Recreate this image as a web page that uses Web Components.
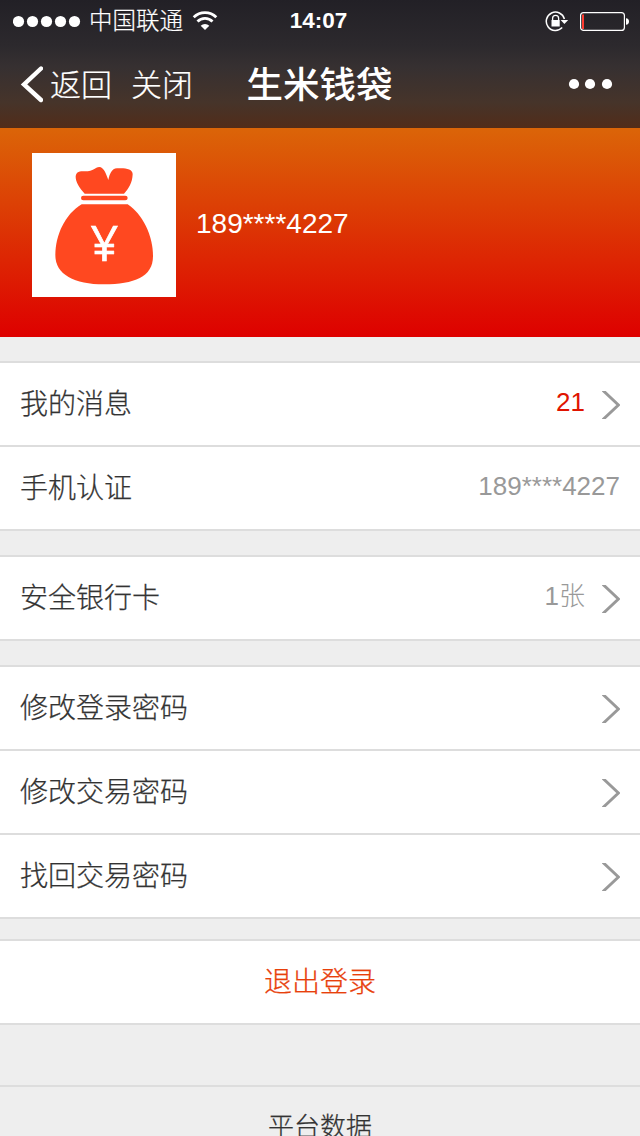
<!DOCTYPE html>
<html lang="zh-CN">
<head>
<meta charset="utf-8">
<title>生米钱袋</title>
<style>
    html, body {
        margin: 0;
        height: 100%;
        overflow: hidden;
        background: #eee;
    }
    body {
        font-family: "Liberation Sans", "Noto Sans CJK SC", sans-serif;
        color: #333;
    }
</style>
</head>
<body>
<wallet-page></wallet-page>

<script>
// 状态栏
class StatusBar extends HTMLElement {
    constructor() {
        super();
        this.attachShadow({ mode: 'open' });
        this.shadowRoot.innerHTML = `
            <style>
                :host {
                    display: grid;
                    grid-template-columns: 1fr auto 1fr;
                    align-items: center;
                    height: 40px;
                    padding: 0 13px 0 13px;
                    color: #fff;
                }
                .left, .right { display: flex; align-items: center; }
                .right { justify-content: flex-end; gap: 10px; margin-right: -2px; }
                .carrier {
                    margin: 0 9px 0 8px;
                    font-size: 23.5px;
                    line-height: 41px;
                    font-weight: 300;
                    -webkit-text-stroke: .2px;
                }
                .time { margin-right: 3px; font-size: 22.5px; font-weight: bold; line-height: 42px; }
                svg { display: block; }
            </style>
            <div class="left">
                <svg width="68" height="40" fill="#fff">
                    <circle cx="5.5" cy="20.5" r="5.6"/><circle cx="19.5" cy="20.5" r="5.6"/>
                    <circle cx="33.5" cy="20.5" r="5.6"/><circle cx="47.5" cy="20.5" r="5.6"/>
                    <circle cx="61.5" cy="20.5" r="5.6"/>
                </svg>
                <span class="carrier">中国联通</span>
                <svg width="26" height="40" fill="none" stroke="#fff" stroke-width="2.8">
                    <path d="M1.7 16.2a16 16 0 0 1 22.6 0"/>
                    <path d="M5.5 20.5a10.6 10.6 0 0 1 15 0"/>
                    <path d="M13 29l-4.3-4.3a6.1 6.1 0 0 1 8.6 0z" fill="#fff" stroke="none"/>
                </svg>
            </div>
            <span class="time"><slot></slot></span>
            <div class="right">
                <svg width="25" height="40" fill="none" stroke="#fff">
                    <path d="M19.4 18a9.2 9.2 0 1 0-2.2 8.6" stroke-width="1.5"/>
                    <path d="M15.6 19h7.6l-3.8 4z" fill="#fff" stroke="none"/>
                    <path d="M7.6 19v-1.7a3 3 0 0 1 6 0v1.7" stroke-width="1.3"/>
                    <path d="M6.5 19h8.2v6.5h-8.2z" fill="#fff" stroke="none"/>
                </svg>
                <svg width="49" height="40">
                    <rect x=".6" y="11.6" width="43.8" height="17.8" rx="3" fill="none" stroke="#fff" stroke-width="1.2"/>
                    <path d="M2 13.5h2v14.5h-2z" fill="#ff3b30"/>
                    <path d="M46 17.2c2 0 3 1.5 3 3.3s-1 3.3-3 3.3z" fill="#fff"/>
                </svg>
            </div>
        `;
    }
}
customElements.define('status-bar', StatusBar);

// 导航栏
class NavBar extends HTMLElement {
    constructor() {
        super();
        this.attachShadow({ mode: 'open' });
        this.shadowRoot.innerHTML = `
            <style>
                :host {
                    display: grid;
                    grid-template-columns: 1fr auto 1fr;
                    align-items: center;
                    height: 88px;
                    padding: 0 27px 0 20px;
                    color: #fff;
                }
                .left {
                    display: flex;
                    align-items: center;
                    font-size: 31px;
                    font-weight: 300;
                    line-height: 84px;
                    -webkit-text-stroke: .2px;
                }
                .left span { padding-top: 4px; }
                .back { margin: 0 19px 0 7px; }
                .title { padding: 3px 0 0 6px; font-size: 36.5px; font-weight: 500; line-height: 85px; }
                .more { justify-self: end; }
                svg { display: block; }
            </style>
            <div class="left">
                <svg width="23" height="88"><path d="M21 28.5L4 44.5l17 15.5" fill="none" stroke="#fff" stroke-width="4.4" stroke-linecap="round"/></svg>
                <span class="back">返回</span>
                <span>关闭</span>
            </div>
            <span class="title"><slot></slot></span>
            <svg class="more" width="45" height="88" fill="#fff">
                <circle cx="6" cy="44" r="5.1"/><circle cx="22" cy="44" r="5.1"/><circle cx="39" cy="44" r="5.1"/>
            </svg>
        `;
    }
}
customElements.define('nav-bar', NavBar);

// 用户信息
class UserCard extends HTMLElement {
    constructor() {
        super();
        this.attachShadow({ mode: 'open' });
        this.shadowRoot.innerHTML = `
            <style>
                :host {
                    display: flex;
                    align-items: flex-start;
                    gap: 20px;
                    box-sizing: border-box;
                    height: 209px;
                    padding: 25px 32px;
                    background: linear-gradient(#db6508, #de0000);
                    color: #fff;
                    font-size: 28px;
                    line-height: 142px;
                }
                svg { display: block; background: #fff; }
            </style>
            <svg width="144" height="144" viewBox="0 0 432 432" fill="#ff4820">
                <path d="M158 122C143 107 130 86 131 70C133 56 143 55 158 55C187 55 188 43 202 42C215 42 222 62 229 81C233 63 239 47 255 46C275 44 303 46 302 64C301 90 290 107 276 122Z"/>
                <rect x="147" y="128" width="140" height="14" rx="7"/>
                <path d="M149 154H287C332 184 363 247 363 310C363 372 306 394 216 394C127 394 70 365 70 306C70 247 99 184 149 154Z"/>
                <text x="217" y="325" text-anchor="middle" font-family="Open Sans" font-size="146" font-weight="500" fill="#fff" stroke="#fff" stroke-width="2">¥</text>
            </svg>
            <slot></slot>
        `;
    }
}
customElements.define('user-card', UserCard);

// 列表分组
class CellGroup extends HTMLElement {
    constructor() {
        super();
        this.attachShadow({ mode: 'open' });
        this.shadowRoot.innerHTML = `
            <style>
                :host {
                    display: block;
                    background: #fff;
                    border-bottom: 2px solid #ddd;
                }
            </style>
            <slot></slot>
        `;
    }
}
customElements.define('cell-group', CellGroup);

// 列表行：value 右侧文字，arrow 是否显示箭头
class CellItem extends HTMLElement {
    constructor() {
        super();
        this.attachShadow({ mode: 'open' });
        const value = this.getAttribute('value') || '';
        const arrow = this.hasAttribute('arrow')
            ? '<svg width="18" height="28"><path d="M0-1.5L16.4 14L0 29.5" fill="none" stroke="#999" stroke-width="2.9"/></svg>'
            : '';
        this.shadowRoot.innerHTML = `
            <style>
                :host {
                    display: flex;
                    align-items: center;
                    box-sizing: border-box;
                    height: 84px;
                    padding: 2px 20px 0;
                    border-top: 2px solid #ddd;
                    font-size: 28px;
                    font-weight: 300;
                    line-height: 80px;
                    -webkit-text-stroke: .25px;
                }
                #value {
                    margin-left: auto;
                    padding-bottom: 6px;
                    line-height: 74px;
                    font-size: 26px;
                    color: var(--value-color, #999);
                    -webkit-text-stroke: 0;
                }
                svg { display: block; margin: 0 0 0 17px; }
            </style>
            <slot></slot>
            <span id="value"></span>
            ${arrow}
        `;
        this.shadowRoot.querySelector('#value').textContent = value;
    }
}
customElements.define('cell-item', CellItem);

// 整页
class WalletPage extends HTMLElement {
    constructor() {
        super();
        this.attachShadow({ mode: 'open' });
        this.shadowRoot.innerHTML = `
            <style>
                :host { display: block; width: 640px; height: 1136px; overflow: hidden; }
                header {
                    background: linear-gradient(#222026, #2c292d 35%, #363031 52%, #46342a 80%, #522c19);
                }
                main { display: flex; flex-direction: column; gap: 24px; padding-top: 24px; }
                .msg { --value-color: #e01400; }
                .logout, footer {
                    border-top: 2px solid #ddd;
                    font-weight: 300;
                    text-align: center;
                    -webkit-text-stroke: .25px;
                }
                .logout {
                    box-sizing: border-box;
                    height: 86px;
                    margin-top: -4px;
                    padding-top: 2px;
                    color: #e8400c;
                    font-size: 28px;
                    line-height: 80px;
                }
                footer {
                    margin-top: 36px;
                    padding-top: 1px;
                    font-size: 26px;
                    line-height: 78px;
                }
            </style>
            <header>
                <status-bar>14:07</status-bar>
                <nav-bar>生米钱袋</nav-bar>
            </header>
            <user-card>189****4227</user-card>
            <main>
                <cell-group>
                    <cell-item class="msg" value="21" arrow>我的消息</cell-item>
                    <cell-item value="189****4227">手机认证</cell-item>
                </cell-group>
                <cell-group>
                    <cell-item value="1张" arrow>安全银行卡</cell-item>
                </cell-group>
                <cell-group>
                    <cell-item arrow>修改登录密码</cell-item>
                    <cell-item arrow>修改交易密码</cell-item>
                    <cell-item arrow>找回交易密码</cell-item>
                </cell-group>
                <cell-group class="logout">退出登录</cell-group>
                <footer>平台数据</footer>
            </main>
        `;
    }
}
customElements.define('wallet-page', WalletPage);
</script>
</body>
</html>
